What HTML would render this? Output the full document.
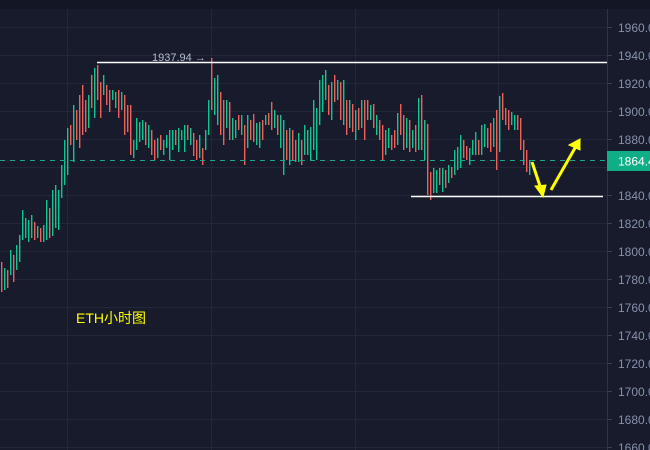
<!DOCTYPE html>
<html><head><meta charset="utf-8"><style>
html,body{margin:0;padding:0;background:#171b2c;width:650px;height:450px;overflow:hidden}
svg{display:block}
text{font-family:"Liberation Sans",sans-serif}
</style></head><body>
<svg width="650" height="450" xmlns="http://www.w3.org/2000/svg">
<rect width="650" height="450" fill="#171b2c"/>
<rect width="650" height="9" fill="#131624"/>
<g stroke="#222739" stroke-width="1">
<path d="M0 27.5H607M0 55.5H607M0 83.5H607M0 111.5H607M0 139.5H607M0 167.5H607M0 195.5H607M0 223.5H607M0 251.5H607M0 279.5H607M0 307.5H607M0 335.5H607M0 363.5H607M0 391.5H607M0 419.5H607M0 447.5H607"/>
<path d="M67.5 9V450M211.5 9V450M355.5 9V450M498.5 9V450"/>
</g>
<path stroke="#3a4058" d="M607 27.5h5M607 55.5h5M607 83.5h5M607 111.5h5M607 139.5h5M607 167.5h5M607 195.5h5M607 223.5h5M607 251.5h5M607 279.5h5M607 307.5h5M607 335.5h5M607 363.5h5M607 391.5h5M607 419.5h5M607 447.5h5"/>
<path stroke="#f0605a" stroke-width="1.4" fill="none" d="M1.7 262V292M7.7 270V288M13.7 255V282M34.7 222V240M40.7 228V242M49.7 208V238M70.7 125V145M76.7 110V140M79.7 95V148M82.7 85V135M85.7 100V132M91.7 75V108M97.7 65V100M100.7 82V118M106.7 85V105M109.7 90V112M118.7 90V118M124.7 95V135M127.7 105V132M130.7 105V155M145.7 122V145M151.7 130V155M154.7 140V160M160.7 135V150M175.7 130V145M187.7 125V140M193.7 133V156M196.7 140V160M202.7 148V165M211.7 58V110M220.7 92V135M223.7 100V145M229.7 102V140M238.7 115V130M244.7 125V165M250.7 120V140M253.7 114V142M262.7 120V140M268.7 113V125M271.7 102V130M277.7 115V135M286.7 130V160M292.7 130V160M295.7 140V162M301.7 140V165M328.7 85V115M334.7 75V102M340.7 82V120M346.7 100V135M352.7 104V132M358.7 108V130M364.7 100V140M367.7 100V120M373.7 104V128M379.7 120V140M382.7 125V160M391.7 135V150M394.7 130V148M400.7 104V135M403.7 115V150M409.7 120V152M415.7 125V152M421.7 95V150M427.7 124V195M430.7 172V200M439.7 168V185M445.7 170V188M451.7 167V178M463.7 140V158M466.7 146V160M478.7 140V155M487.7 128V148M490.7 123V152M496.7 110V170M502.7 93V120M505.7 108V125M508.7 110V130M517.7 115V130M520.7 118V150M523.7 140V165M526.7 150V172"/>
<path stroke="#12c48f" stroke-width="1.4" fill="none" d="M4.7 268V290M10.7 250V275M16.7 245V270M19.7 235V262M22.7 210V240M25.7 218V238M28.7 220V242M31.7 215V238M37.7 226V238M43.7 225V242M46.7 200V240M52.7 190V236M55.7 185V228M58.7 190V230M61.7 165V198M64.7 140V185M67.7 128V175M73.7 105V162M88.7 95V128M94.7 68V118M103.7 75V95M112.7 90V100M115.7 92V108M121.7 92V110M133.7 140V158M136.7 118V150M139.7 122V142M142.7 120V140M148.7 125V148M157.7 138V158M163.7 140V155M166.7 135V148M169.7 130V160M172.7 130V150M178.7 128V152M181.7 130V140M184.7 125V152M190.7 128V145M199.7 135V158M205.7 130V150M208.7 100V135M214.7 78V115M217.7 75V125M226.7 100V128M232.7 118V140M235.7 120V138M241.7 115V135M247.7 115V148M256.7 123V145M259.7 122V148M265.7 115V125M274.7 110V128M280.7 115V148M283.7 120V175M289.7 128V165M298.7 133V162M304.7 125V155M307.7 130V155M310.7 127V160M313.7 100V150M316.7 108V160M319.7 80V125M322.7 75V112M325.7 70V100M331.7 82V120M337.7 80V100M343.7 80V125M349.7 100V128M355.7 110V140M361.7 100V128M370.7 105V120M376.7 115V135M385.7 130V155M388.7 128V148M397.7 113V145M406.7 118V148M412.7 130V148M418.7 98V150M424.7 120V160M433.7 168V193M436.7 170V193M442.7 168V192M448.7 165V183M454.7 150V175M457.7 147V170M460.7 135V168M469.7 148V165M472.7 140V155M475.7 132V155M481.7 125V155M484.7 124V147M493.7 118V147M499.7 96V152M511.7 112V125M514.7 115V130M529.7 160V175"/>
<line x1="0" y1="160.5" x2="607" y2="160.5" stroke="#1fa888" stroke-width="1" stroke-dasharray="5,5"/>
<line x1="97" y1="62.5" x2="607" y2="62.5" stroke="#ffffff" stroke-width="1.5"/>
<line x1="411" y1="196.5" x2="603" y2="196.5" stroke="#ffffff" stroke-width="1.5"/>
<text x="152" y="61" font-size="11" fill="#b4bccf">1937.94 →</text>
<line x1="607.5" y1="9" x2="607.5" y2="450" stroke="#2e3448"/>
<g font-size="12" fill="#8790ad">
<text x="618" y="32">1960.0</text><text x="618" y="60">1940.0</text><text x="618" y="88">1920.0</text><text x="618" y="116">1900.0</text><text x="618" y="144">1880.0</text><text x="618" y="200">1840.0</text><text x="618" y="228">1820.0</text><text x="618" y="256">1800.0</text><text x="618" y="284">1780.0</text><text x="618" y="312">1760.0</text><text x="618" y="340">1740.0</text><text x="618" y="368">1720.0</text><text x="618" y="396">1700.0</text><text x="618" y="424">1680.0</text><text x="618" y="452">1660.0</text>
</g>
<rect x="607" y="151" width="43" height="20" fill="#0fae86"/>
<text x="618" y="165.5" font-size="12" fill="#ffffff">1864.4</text>
<g stroke="#ffff00" stroke-width="3" fill="#ffff00">
<line x1="532" y1="162" x2="540" y2="186"/>
<polygon points="535,186 546,185 543,197" stroke-width="1"/>
<line x1="551" y1="190" x2="575" y2="148"/>
<polygon points="569,145 580,150 580,139" stroke-width="1"/>
</g>
<text x="76" y="323" font-size="14" fill="#ffff00" style='font-family:"Liberation Sans","Noto Sans CJK SC",sans-serif'>ETH小时图</text>
</svg>
</body></html>
